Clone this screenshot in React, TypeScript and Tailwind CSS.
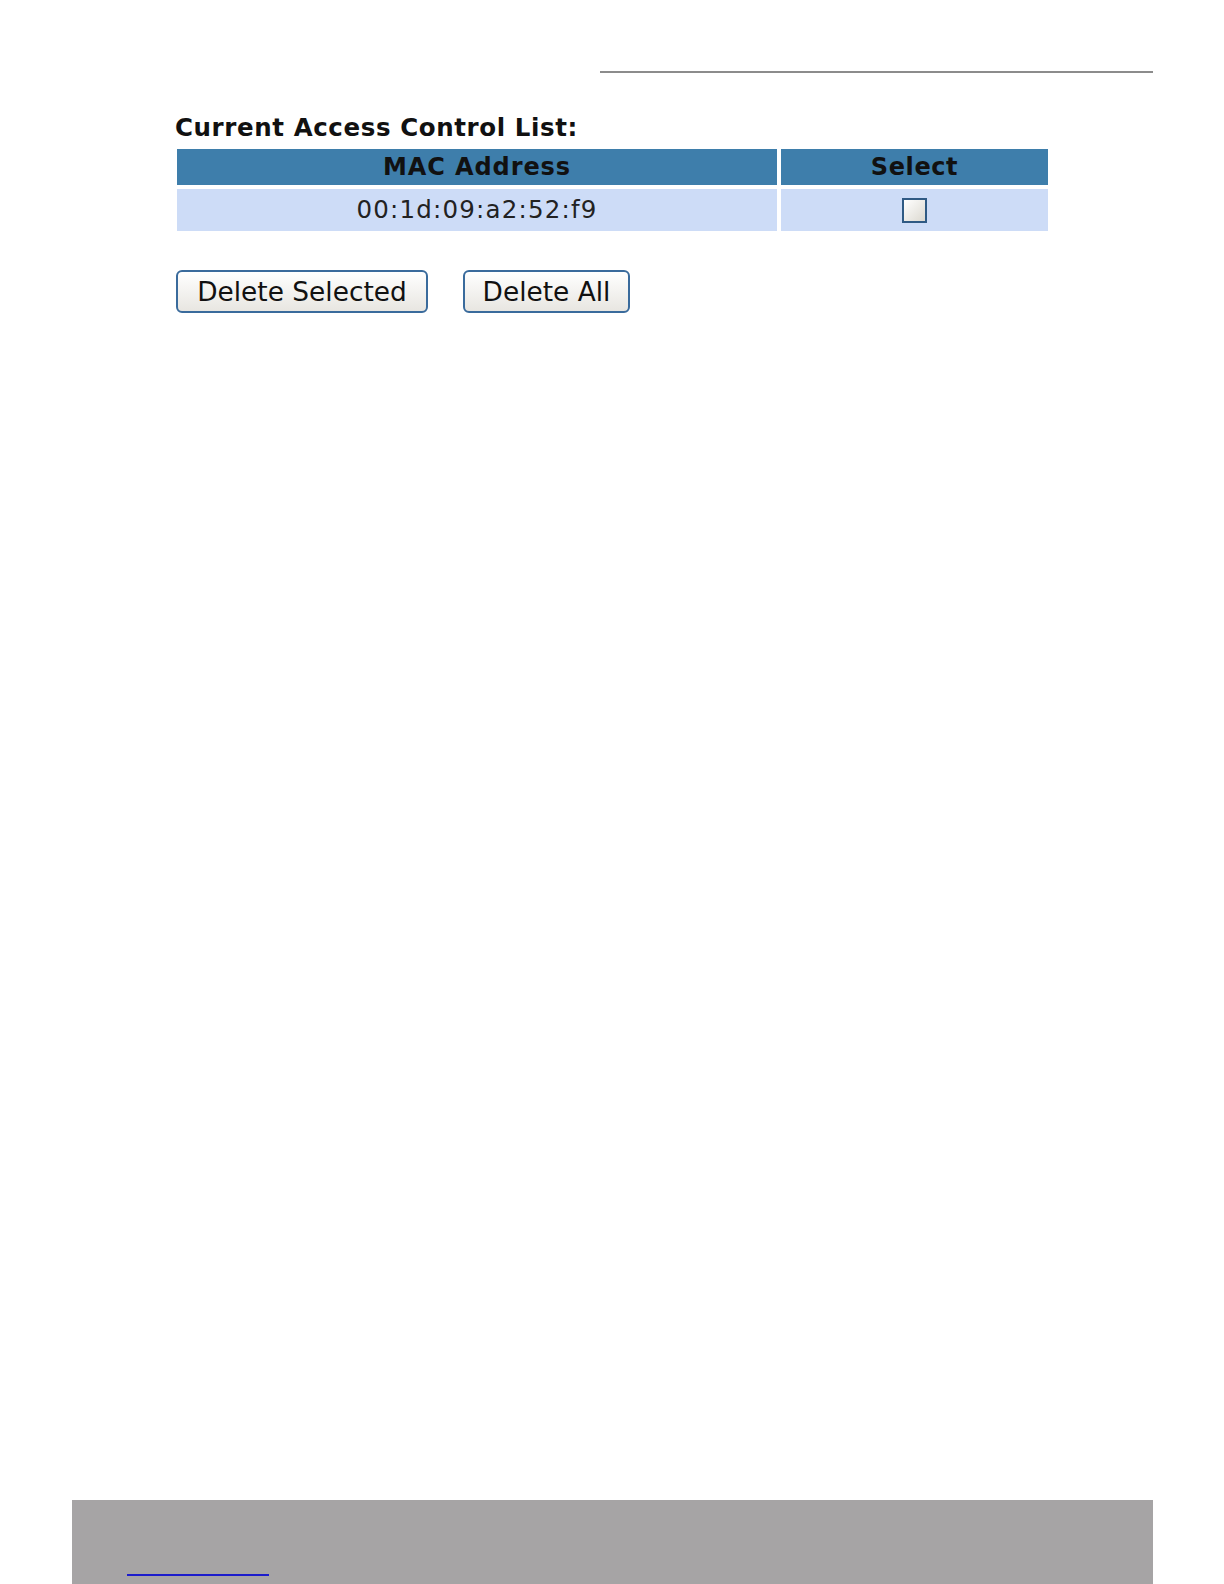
export default function App() {
  const font = { fontFamily: '"DejaVu Sans", Verdana, sans-serif' }
  return (
    <div className="h-[1584px] bg-white flex flex-col overflow-hidden" style={font}>
      <div className="ml-[72px] w-[1081px] flex flex-col">
        <div className="mt-[71px] ml-auto w-[553px] h-[2px] bg-[#8c8c8c]" />

        <div className="mt-[41px] ml-[103px]">
          <h2 className="text-[24.5px] leading-[28px] font-bold text-[#111] tracking-[0.6px]">
            Current Access Control List:
          </h2>

          <table className="mt-[3px] -ml-[2px] border-separate border-spacing-[4px]">
            <thead>
              <tr>
                <th className="w-[600px] h-[36px] p-0 bg-[#3e7eab] text-[24px] leading-[36px] font-bold text-[#111] text-center tracking-[0.9px]">
                  MAC Address
                </th>
                <th className="w-[267px] h-[36px] p-0 bg-[#3e7eab] text-[24px] leading-[36px] font-bold text-[#111] text-center tracking-[0.6px]">
                  Select
                </th>
              </tr>
            </thead>
            <tbody>
              <tr>
                <td className="h-[42px] p-0 bg-[#cddcf7] text-[24.5px] leading-[42px] text-[#222] text-center tracking-[1.2px]">
                  00:1d:09:a2:52:f9
                </td>
                <td className="h-[42px] p-0 bg-[#cddcf7]">
                  <div className="flex justify-center items-center">
                    <div className="w-[25px] h-[25px] border-2 border-[#2f5a84] bg-gradient-to-br from-[#ffffff] to-[#dcd9d0]" />
                  </div>
                </td>
              </tr>
            </tbody>
          </table>

          <div className="mt-[35px] ml-[1px] flex gap-[35px]">
            <button className="w-[252px] h-[43px] rounded-[6px] border-2 border-[#3a6b9c] bg-gradient-to-b from-[#ffffff] to-[#e8e6e1] text-[26.4px] leading-[39px] text-[#111]">
              Delete Selected
            </button>
            <button className="w-[167px] h-[43px] rounded-[6px] border-2 border-[#3a6b9c] bg-gradient-to-b from-[#ffffff] to-[#e8e6e1] text-[26.4px] leading-[39px] text-[#111]">
              Delete All
            </button>
          </div>
        </div>
      </div>

      <div className="mt-auto ml-[72px] w-[1081px] h-[84px] bg-[#a6a4a5] flex flex-col">
        <div className="mt-[74px] ml-[55px] w-[142px] h-[2px] bg-[#1c1ccc]" />
      </div>
    </div>
  )
}
